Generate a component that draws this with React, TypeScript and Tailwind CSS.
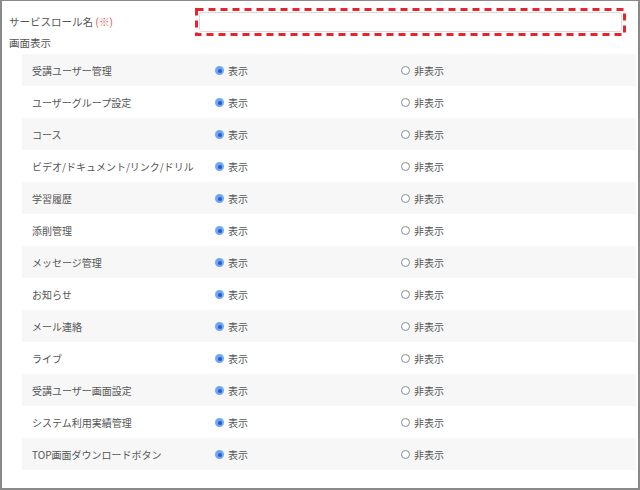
import React from "react"

const items = [
  "受講ユーザー管理",
  "ユーザーグループ設定",
  "コース",
  "ビデオ/ドキュメント/リンク/ドリル",
  "学習履歴",
  "添削管理",
  "メッセージ管理",
  "お知らせ",
  "メール連絡",
  "ライブ",
  "受講ユーザー画面設定",
  "システム利用実績管理",
  "TOP画面ダウンロードボタン",
]

function Radio({ checked }: { checked: boolean }) {
  if (checked) {
    return (
      <span className="flex h-[9px] w-[9px] items-center justify-center rounded-full bg-[#6fa8f2]">
        <span className="h-[4px] w-[4px] rounded-full bg-[#1f5fd0]" />
      </span>
    )
  }
  return <span className="h-[9px] w-[9px] rounded-full border border-[#8c8c8c] bg-white" />
}

export default function App() {
  return (
    <div
      className="h-[490px] w-[640px] border-x-2 border-b-2 border-t border-[#8a8a8a] bg-white text-[10px] text-[#555]"
      style={{ fontFamily: '"Noto Sans CJK JP", "Noto Sans", sans-serif' }}
    >
      <div className="mt-[7px] flex h-[28px] items-center">
        <div className="w-[193px] pl-[7px] text-[10.5px]">
          サービスロール名 <span className="text-[#e05a5a]">(※)</span>
        </div>
        <div className="relative h-[28px] w-[431px] p-[4px]">
          <div className="h-full w-full rounded-[3px] border border-[#dcdcdc] bg-white" />
          {/* red dashed highlight drawn on top */}
          <svg className="absolute inset-0" width="431" height="28">
            <rect
              x="1.5"
              y="1.5"
              width="428"
              height="25"
              fill="none"
              stroke="#e8232d"
              strokeWidth="3"
              strokeDasharray="7 5"
            />
          </svg>
        </div>
      </div>
      <div className="flex h-[14px] items-center pl-[7px] text-[10.5px]">画面表示</div>
      <div className="ml-[20px] mr-[2px] mt-[4px]">
        {items.map((label, i) => (
          <div
            key={label}
            className={`grid h-[32px] grid-cols-[192px_186px_1fr] items-center pt-[1px] ${i % 2 === 0 ? "bg-[#f7f7f7]" : "bg-white"}`}
          >
            <div className="pl-[10px] whitespace-nowrap">{label}</div>
            <div className="flex items-center gap-[4px] pl-[1px]">
              <Radio checked={true} />
              <span>表示</span>
            </div>
            <div className="flex items-center gap-[4px] pl-[1px]">
              <Radio checked={false} />
              <span>非表示</span>
            </div>
          </div>
        ))}
      </div>
    </div>
  )
}
